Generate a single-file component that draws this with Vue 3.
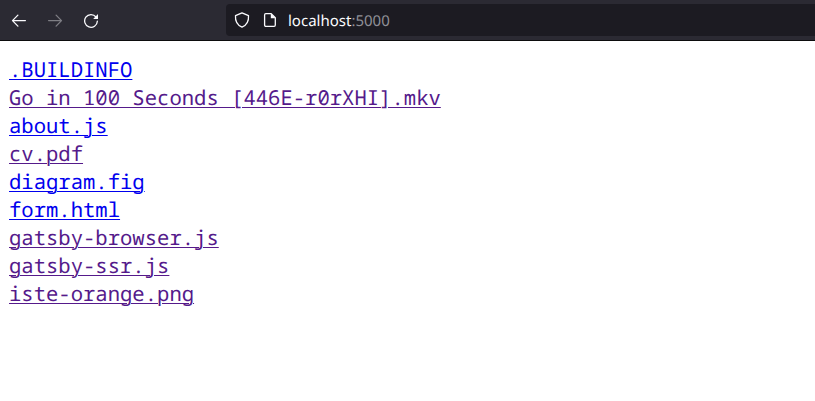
<script setup>
const files = [
  { name: '.BUILDINFO' },
  { name: 'Go in 100 Seconds [446E-r0rXHI].mkv', visited: true },
  { name: 'about.js' },
  { name: 'cv.pdf', visited: true },
  { name: 'diagram.fig' },
  { name: 'form.html' },
  { name: 'gatsby-browser.js', visited: true },
  { name: 'gatsby-ssr.js', visited: true },
  { name: 'iste-orange.png', visited: true },
]
</script>

<template>
  <div class="window">
    <header class="toolbar">
      <nav class="controls">
        <svg class="icon" viewBox="0 0 16 16"><path d="M14.4 8.6H1.8M6.9 3.1 1.5 8.6l5.4 5.5" /></svg>
        <svg class="icon disabled" viewBox="0 0 16 16"><path d="M1.6 8.6h12.6M9.1 3.1l5.4 5.5-5.4 5.5" /></svg>
        <svg class="icon" viewBox="0 0 16 16">
          <path d="M13 5A6.35 6.35 0 1 0 14.35 9.2" />
          <path class="solid" d="M15 2v5.1h-4.8z" />
        </svg>
      </nav>
      <div class="address">
        <svg class="icon" viewBox="0 0 16 16"><path d="M8 .9 14.5 3.6C14.9 8.8 12.5 13.2 8 15.2 3.5 13.2 1.1 8.8 1.5 3.6Z" /></svg>
        <svg class="icon" viewBox="0 0 16 16">
          <path d="M3.8 1.7h5.4l4.1 4.1v7.3a1.2 1.2 0 0 1-1.2 1.2H3.8a1.2 1.2 0 0 1-1.2-1.2V2.9a1.2 1.2 0 0 1 1.2-1.2Z" />
          <path class="solid" d="M8.8 1.4 13.7 6.3H8.8z" />
        </svg>
        <span class="url">localhost<span class="port">:5000</span></span>
      </div>
    </header>
    <main class="listing">
      <a v-for="file in files" :key="file.name" href="#" :class="{ seen: file.visited }">{{ file.name }}</a>
    </main>
  </div>
</template>

<style>
body {
  margin: 0;
  background: #fff;
}
</style>

<style scoped>
.window {
  height: 401px;
  overflow: hidden;
  background: #fff;
}
.toolbar {
  box-sizing: border-box;
  display: flex;
  height: 41px;
  padding: 4px 0 4px 11px;
  background: #2b2a33;
  border-bottom: 1px solid #0c0c0d;
}
.controls {
  display: flex;
  align-items: center;
  gap: 20px;
  width: 215px;
}
.icon {
  flex: none;
  width: 16px;
  height: 16px;
  fill: none;
  stroke: #fbfbfe;
  stroke-width: 1.3;
  stroke-linecap: round;
  stroke-linejoin: round;
}
.solid {
  fill: #fbfbfe;
  stroke: none;
}
.disabled {
  opacity: 0.4;
}
.address {
  display: flex;
  flex: 1;
  align-items: center;
  gap: 12px;
  height: 32px;
  padding-left: 8px;
  background: #1c1b22;
  border-radius: 4px 0 0 4px;
}
.url {
  margin-left: -2px;
  padding-top: 2px;
  color: #fbfbfe;
  font: 15px/20px "Noto Sans", sans-serif;
  text-rendering: geometricPrecision;
  white-space: nowrap;
}
.port {
  color: #8f8f96;
}
.listing {
  display: flex;
  flex-direction: column;
  align-items: flex-start;
  padding: 15px 9px;
  font: 20.57px/28px "Noto Sans Mono", "DejaVu Sans Mono", monospace;
  text-rendering: geometricPrecision;
}
.listing a {
  color: #0000ee;
  white-space: pre;
  text-decoration: underline;
  text-decoration-thickness: 1px;
  text-underline-offset: 2px;
}
.listing a.seen {
  color: #551a8b;
}
</style>
